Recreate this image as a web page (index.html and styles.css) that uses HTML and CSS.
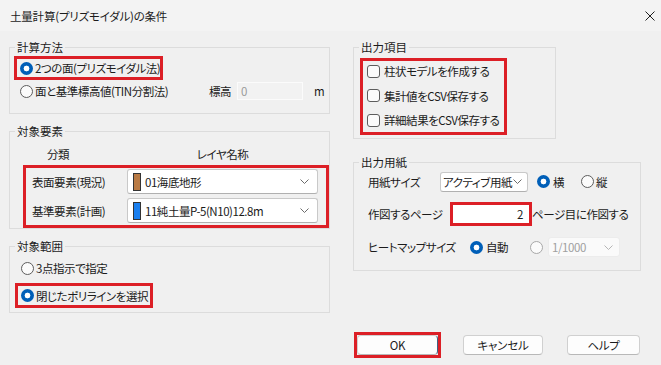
FILE: index.html
```html
<!DOCTYPE html>
<html lang="ja">
<head>
    <meta charset="UTF-8">
    <title>土量計算(プリズモイダル)の条件</title>
    <link rel="stylesheet" href="styles.css">
</head>
<body>
    <div class="titlebar">
        <span class="title">土量計算(プリズモイダル)の条件</span>
        <svg class="close" width="10" height="10" viewBox="0 0 10 10">
            <path d="M0.5 0.5 L9.5 9.5 M9.5 0.5 L0.5 9.5" stroke="#1f1f1f" stroke-width="1" fill="none"/>
        </svg>
    </div>

    <div class="content">
        <div class="col">
            <fieldset class="group method">
                <legend>計算方法</legend>
                <div class="row mark mark-method">
                    <span class="radio on"></span>
                    <span>2つの面(プリズモイダル法)</span>
                </div>
                <div class="row tin-row">
                    <span class="radio"></span>
                    <span class="tin-text">面と基準標高値(TIN分割法)</span>
                    <span>標高</span>
                    <span class="edit disabled">0</span>
                    <span class="unit">m</span>
                </div>
            </fieldset>

            <fieldset class="group target">
                <legend>対象要素</legend>
                <div class="layer-head">
                    <span class="head-kind">分類</span>
                    <span class="head-name">レイヤ名称</span>
                </div>
                <div class="mark layers">
                    <div class="layer-row">
                        <span class="layer-label">表面要素(現況)</span>
                        <div class="combo layer-combo">
                            <span class="swatch brown"></span>
                            <span class="val">01海底地形</span>
                            <svg class="chev" width="9" height="5" viewBox="0 0 9 5"><path d="M0.5 0.5 L4.5 4.5 L8.5 0.5" stroke="#6b6b6b" fill="none"/></svg>
                        </div>
                    </div>
                    <div class="layer-row">
                        <span class="layer-label">基準要素(計画)</span>
                        <div class="combo layer-combo">
                            <span class="swatch blue"></span>
                            <span class="val">11純土量P-5(N10)12.8m</span>
                            <svg class="chev" width="9" height="5" viewBox="0 0 9 5"><path d="M0.5 0.5 L4.5 4.5 L8.5 0.5" stroke="#6b6b6b" fill="none"/></svg>
                        </div>
                    </div>
                </div>
            </fieldset>

            <fieldset class="group range">
                <legend>対象範囲</legend>
                <div class="row range-row">
                    <span class="radio"></span>
                    <span>3点指示で指定</span>
                </div>
                <div class="row mark mark-range">
                    <span class="radio on"></span>
                    <span>閉じたポリラインを選択</span>
                </div>
            </fieldset>
        </div>

        <div class="col">
            <fieldset class="group outputs">
                <legend>出力項目</legend>
                <div class="mark checks">
                    <div class="row check-row"><span class="check"></span><span>柱状モデルを作成する</span></div>
                    <div class="row check-row"><span class="check"></span><span>集計値をCSV保存する</span></div>
                    <div class="row check-row"><span class="check"></span><span>詳細結果をCSV保存する</span></div>
                </div>
            </fieldset>

            <fieldset class="group paper">
                <legend>出力用紙</legend>
                <div class="row paper-row1">
                    <span class="paper-label w72">用紙サイズ</span>
                    <div class="combo size-combo">
                        <span class="val">アクティブ用紙</span>
                        <svg class="chev" width="9" height="5" viewBox="0 0 9 5"><path d="M0.5 0.5 L4.5 4.5 L8.5 0.5" stroke="#6b6b6b" fill="none"/></svg>
                    </div>
                    <span class="radio on r-yoko"></span>
                    <span class="opt">横</span>
                    <span class="radio r-tate"></span>
                    <span class="opt-tate">縦</span>
                </div>
                <div class="row paper-row2">
                    <span class="paper-label w82">作図するページ</span>
                    <span class="mark page-edit">2</span>
                    <span>ページ目に作図する</span>
                </div>
                <div class="row paper-row3">
                    <span class="paper-label w102">ヒートマップサイズ</span>
                    <span class="radio on"></span>
                    <span class="opt">自動</span>
                    <span class="radio disabled r-scale"></span>
                    <div class="combo scale-combo disabled">
                        <span class="val">1/1000</span>
                        <svg class="chev" width="9" height="5" viewBox="0 0 9 5"><path d="M0.5 0.5 L4.5 4.5 L8.5 0.5" stroke="#b5b5b5" fill="none"/></svg>
                    </div>
                </div>
            </fieldset>

            <div class="buttons">
                <div class="mark ok-mark"><button class="btn ok">OK</button></div>
                <button class="btn cancel">キャンセル</button>
                <button class="btn help">ヘルプ</button>
            </div>
        </div>
    </div>
</body>
</html>
```

FILE: styles.css
```css
body {
    margin: 0;
    background-color: #f0f0f0;
    font-family: "Noto Sans CJK JP", "Noto Sans", sans-serif;
    font-size: 11.5px;
    line-height: 16px;
    color: #1b1b1b;
    font-feature-settings: "palt";
    letter-spacing: -0.45px;
    white-space: nowrap;
}

.titlebar {
    height: 31px;
    display: flex;
    align-items: center;
    justify-content: space-between;
    padding: 0 6px 0 10px;
    background-color: #f3f3f3;
}

.title {
    letter-spacing: -0.2px;
}

.content {
    display: grid;
    grid-template-columns: 321px 288px;
    column-gap: 23px;
    padding: 8px 0 0 9px;
}

.group {
    margin: 0;
    padding: 0;
    border: 1px solid #dcdcdc;
    min-width: 0;
}

.group legend {
    margin-left: 5px;
    padding: 0 2px;
    line-height: 16px;
    letter-spacing: 0;
}

.row {
    display: flex;
    align-items: center;
    box-sizing: border-box;
}

.row > span {
    flex: none;
}

.mark {
    border: 3px solid #dc1f26;
    box-sizing: border-box;
}

/* controls */
.radio {
    width: 13px;
    height: 13px;
    border-radius: 50%;
    border: 1px solid #5d5d5d;
    background-color: #fbfbfb;
    box-sizing: border-box;
    flex: none;
}

.radio.on {
    border: none;
    background: radial-gradient(circle, #fff 2.6px, #005fb8 3.2px);
}

.radio.disabled {
    border-color: #a8a8a8;
}

.check {
    width: 13px;
    height: 13px;
    border: 1px solid #5d5d5d;
    border-radius: 3px;
    background-color: #fbfbfb;
    box-sizing: border-box;
    flex: none;
}

.combo {
    display: flex;
    align-items: center;
    background-color: #fff;
    border: 1px solid #c9c9c9;
    border-bottom-color: #b0b0b0;
    border-radius: 3px;
    box-sizing: border-box;
}

.combo .val {
    flex: 1;
}

.combo.disabled {
    background-color: #fafafa;
    border-color: #ececec;
    color: #a0a0a0;
}

.edit {
    box-sizing: border-box;
    height: 18px;
    width: 66px;
    padding-left: 3px;
    border: 1px solid #fbfbfb;
    background-color: #f2f2f2;
}

.edit.disabled {
    color: #9a9a9a;
}

/* 計算方法 */
.method {
    padding-bottom: 11px;
}

.mark-method {
    margin: 1px 0 0 4px;
    width: 149px;
    height: 24px;
    padding-left: 3px;
    gap: 2px;
}

.tin-row {
    height: 22px;
    padding-left: 10px;
    gap: 2px;
}

.tin-row .tin-text {
    width: 172px;
}

.tin-row .edit {
    margin-left: 4px;
}

.unit {
    margin-left: 9px;
}

/* 対象要素 */
.target {
    margin-top: 9px;
}

.layer-head {
    display: grid;
    grid-template-columns: 117px 191px;
    margin-top: 7px;
}

.head-kind {
    padding-left: 37px;
}

.head-name {
    text-align: center;
}

.layers {
    margin: 3px 0 0 13px;
    width: 306px;
    padding: 1px 0 2px 6px;
    display: flex;
    flex-direction: column;
    gap: 4px;
}

.layer-row {
    display: flex;
    align-items: center;
}

.layer-label {
    width: 95px;
}

.layer-combo {
    width: 191px;
    height: 25px;
    padding: 0 8px 0 5px;
}

.swatch {
    width: 8px;
    height: 18px;
    box-sizing: border-box;
    border: 1px solid #333;
    margin-right: 4px;
    flex: none;
}

.swatch.brown {
    background-color: #b97a44;
}

.swatch.blue {
    background-color: #1a7fef;
}

/* 対象範囲 */
.range {
    margin-top: 9px;
    padding-bottom: 4px;
}

.range-row {
    margin-top: 4px;
    height: 20px;
    padding-left: 11px;
    gap: 2px;
}

.mark-range {
    margin: 5px 0 0 5px;
    width: 138px;
    height: 25px;
    padding-left: 3px;
    gap: 2px;
}

/* 出力項目 */
.outputs {
    width: 203px;
    box-sizing: border-box;
    padding-bottom: 3px;
}

.checks {
    margin: 3px 0 0 6px;
    width: 147px;
    padding: 0 0 2px 4px;
    display: flex;
    flex-direction: column;
    gap: 4.5px;
}

.check-row {
    height: 20px;
    gap: 4px;
}

/* 出力用紙 */
.paper {
    margin-top: 15px;
    padding-bottom: 12px;
}

.paper .row {
    padding-left: 14px;
}

.paper-label {
    flex: none;
}

.w72 { width: 72px; }
.w82 { width: 82px; }
.w102 { width: 102px; }

.paper-row1 {
    margin-top: 1px;
    height: 21px;
}

.size-combo {
    width: 88px;
    height: 20px;
    padding: 0 5px 0 2px;
    flex: none;
}

.r-yoko {
    margin-left: 9px;
}

.opt {
    margin-left: 3px;
}

.r-tate {
    margin-left: 17px;
}

.opt-tate {
    margin-left: 2px;
}

.paper-row2 {
    margin-top: 10px;
    height: 24px;
}

.page-edit {
    width: 82px;
    height: 24px;
    background-color: #fff;
    text-align: right;
    padding-right: 6px;
    line-height: 18px;
}

.paper-row3 {
    margin-top: 10px;
    height: 22px;
}

.r-scale {
    margin-left: 22px;
}

.scale-combo {
    margin-left: 5px;
    width: 72px;
    height: 20px;
    padding: 0 6px 0 3px;
    flex: none;
}

/* buttons */
.buttons {
    display: flex;
    align-items: flex-start;
    margin-top: 61px;
}

.btn {
    font-family: inherit;
    font-size: 11.5px;
    font-feature-settings: "palt";
    letter-spacing: -0.2px;
    color: #1b1b1b;
    height: 20px;
    padding: 0;
    background-color: #fdfdfd;
    border: 1px solid #d0d0d0;
    border-bottom-color: #b8b8b8;
    border-radius: 4px;
    box-sizing: border-box;
}

.ok-mark {
    margin-left: 1px;
    width: 87px;
    height: 26px;
}

.ok {
    width: 81px;
    border-right-color: #3f6283;
}

.cancel {
    margin: 3px 0 0 22px;
    width: 80px;
}

.help {
    margin: 3px 0 0 24px;
    width: 73px;
}
```
